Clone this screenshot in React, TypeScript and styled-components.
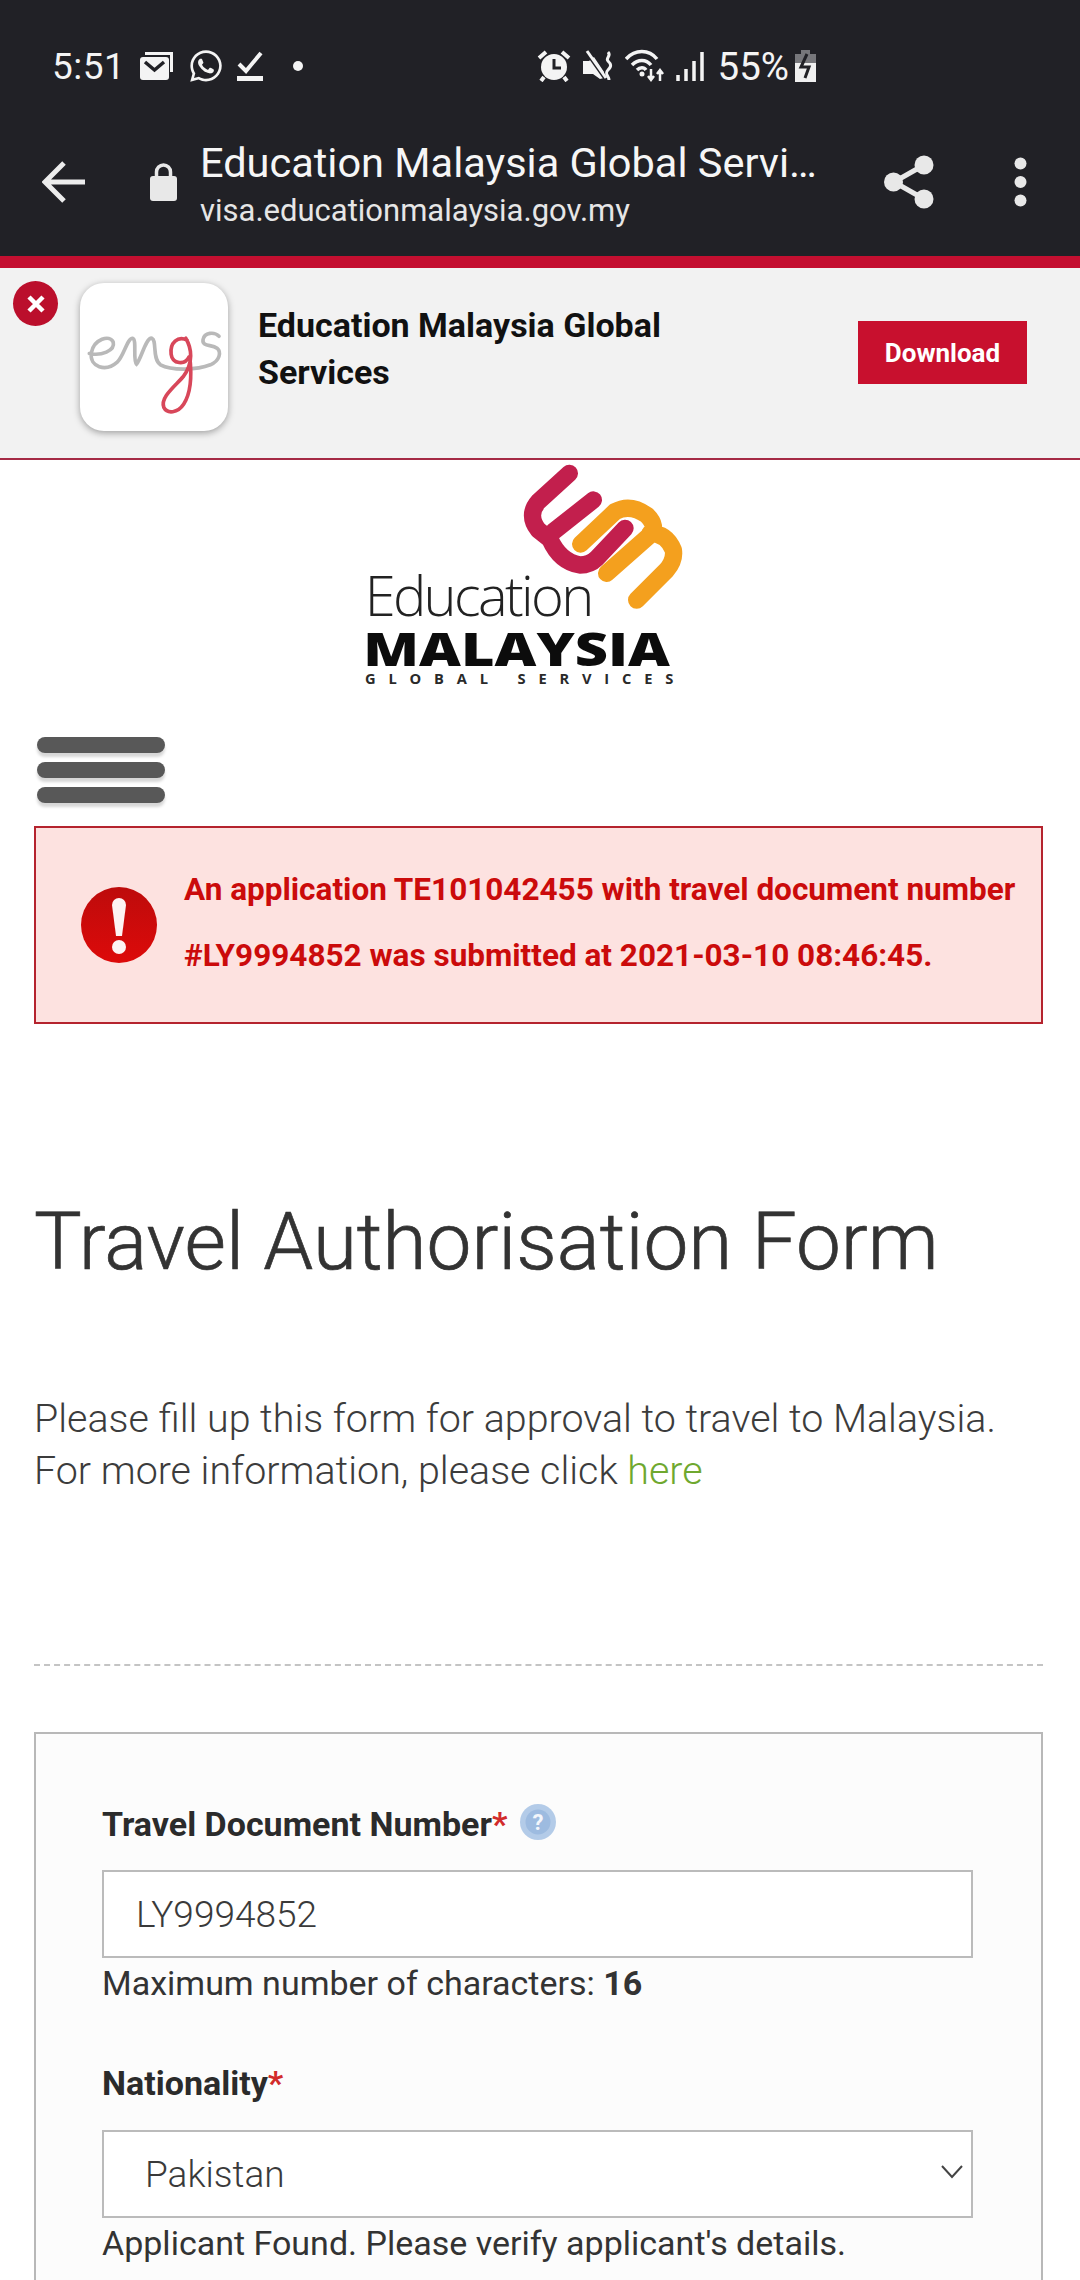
import React from 'react';
import styled, { createGlobalStyle } from 'styled-components';
import { FaWhatsapp } from 'react-icons/fa';

const GlobalStyle = createGlobalStyle`
  html, body {
    margin: 0;
    padding: 0;
    background: #fff;
    font-family: Roboto, "Liberation Sans", sans-serif;
  }
  #root {
    height: 2280px;
    overflow: hidden;
  }
  * { box-sizing: border-box; }
`;

const Header = styled.header`
  height: 256px;
  background: #212126;
  color: #f4f4f4;
  padding-top: 46px;
`;

const StatusBar = styled.div`
  height: 40px;
  display: flex;
  align-items: center;
  padding: 0 264px 0 52px;
`;

const Clock = styled.span`
  font-size: 37px;
  letter-spacing: 0.5px;
  margin-right: 14px;
`;

const StatusIcons = styled.div`
  display: flex;
  align-items: center;
  gap: ${(p: { $gap: number }) => p.$gap}px;
  color: #f4f4f4;
`;

const RightIcons = styled(StatusIcons)`
  margin-left: auto;
`;

const Battery = styled.span`
  font-size: 38.5px;
  margin: 0 -5px 0 3px;
`;

const StatusDot = styled.svg`
  width: 10px;
  height: 10px;
  margin-left: 17px;
`;

const Toolbar = styled.div`
  display: flex;
  align-items: center;
  height: 110px;
  margin-top: 41px;
  padding-left: 42px;
`;

const LockSlot = styled.div`
  margin-left: 65px;
  width: 50px;
  display: flex;
`;

const PageInfo = styled.div`
  width: 632px;
  padding-top: 5px;
  display: flex;
  flex-direction: column;
`;

const PageTitle = styled.div`
  font-size: 41.5px;
  line-height: 48px;
  white-space: nowrap;
  overflow: hidden;
  text-overflow: ellipsis;
  color: #f6f6f6;
`;

const PageUrl = styled.div`
  font-size: 31px;
  line-height: 38px;
  margin-top: 5px;
  color: #e6e6e6;
`;

const ToolbarActions = styled.div`
  margin-left: 52px;
  display: flex;
  align-items: center;
  gap: 80px;
`;

const Banner = styled.section`
  background: #f2f2f2;
  border-top: 12px solid #c40f30;
  border-bottom: 2px solid #a52a45;
  display: flex;
  align-items: flex-start;
  position: relative;
  padding: 15px 53px 0 80px;
  height: 204px;
`;

const CloseButton = styled.button`
  position: absolute;
  left: 13px;
  top: 13px;
  width: 45px;
  height: 45px;
  border-radius: 50%;
  border: 0;
  padding: 0;
  background: #bb0f2c;
  display: flex;
  align-items: center;
  justify-content: center;
`;

const AppIcon = styled.div`
  width: 148px;
  height: 148px;
  border-radius: 24px;
  background: #fff;
  box-shadow: 0 2px 7px rgba(0, 0, 0, 0.35);
  flex: none;
`;

const BannerTitle = styled.div`
  width: 440px;
  margin: 19px 0 0 30px;
  font-size: 34px;
  line-height: 47px;
  font-weight: 700;
  color: #111;
`;

const DownloadButton = styled.button`
  margin: 38px 0 0 auto;
  width: 169px;
  height: 63px;
  background: #c8102e;
  color: #fff;
  border: 0;
  padding: 0;
  font: 700 26px Roboto, sans-serif;
`;

const LogoRow = styled.div`
  display: flex;
  justify-content: center;
  padding-right: 40px;
  height: 240px;
`;

const Main = styled.main`
  padding: 0 37px 0 34px;
`;

const MenuButton = styled.div`
  width: 128px;
  margin: 37px 0 0 3px;
  display: flex;
  flex-direction: column;
  gap: 9px;
`;

const MenuBar = styled.span`
  height: 16px;
  border-radius: 8px;
  background: #585858;
  box-shadow: 0 4px 3px rgba(0, 0, 0, 0.16);
  filter: blur(0.7px);
`;

const Alert = styled.div`
  margin-top: 23px;
  height: 198px;
  border: 2px solid #b5232e;
  background: #fde2e0;
  display: flex;
  align-items: center;
  padding-left: 45px;
`;

const AlertText = styled.div`
  margin: -5px 0 0 27px;
  font-size: 31.500px;
  line-height: 66px;
  font-weight: 700;
  color: #cb0b0b;
  white-space: nowrap;
`;

const Title = styled.h1`
  margin: 173px 0 0;
  font-size: 80px;
  line-height: 90px;
  font-weight: 300;
  color: #333;
  -webkit-text-stroke: 0.7px #333;
`;

const Intro = styled.p`
  margin: 106px 0 0;
  font-size: 39.400px;
  line-height: 52px;
  font-weight: 300;
  color: #3c3c3c;
`;

const IntroLink = styled.a`
  color: #6fa82f;
`;

const Divider = styled.hr`
  margin: 167px 0 0;
  border: 0;
  border-top: 2px dashed #c4c4c4;
`;

const FormCard = styled.form`
  margin-top: 66px;
  border: 2px solid #b8b8b8;
  background: #fcfcfc;
  padding: 66px 68px 100px 66px;
  height: 700px;
`;

const Label = styled.label`
  display: flex;
  align-items: center;
  height: 50px;
  font-size: 34px;
  font-weight: 700;
  color: #2b2b2b;
`;

const Required = styled.span`
  color: #d22b2b;
  font-weight: 700;
`;

const HelpIcon = styled.svg`
  margin: -4px 0 0 12px;
  width: 38px;
  height: 38px;
`;

const Field = styled.div`
  position: relative;
  margin-top: ${(p: { $top: number }) => p.$top}px;
  height: 88px;
`;

const controlStyles = `
  display: block;
  width: 100%;
  height: 100%;
  border: 2px solid #bbb;
  border-radius: 0;
  background: #fff;
  font-family: Roboto, sans-serif;
  font-size: 37px;
  font-weight: 300;
  color: #3a3a3a;
  outline: 0;
`;

const TextInput = styled.input`
  ${controlStyles}
  padding: 0 32px;
`;

const SelectInput = styled.select`
  ${controlStyles}
  appearance: none;
  padding: 0 41px;
`;

const Chevron = styled.svg`
  position: absolute;
  right: 9px;
  top: 34px;
  width: 24px;
  height: 16px;
`;

const Hint = styled.div`
  margin-top: 7px;
  font-size: 34px;
  line-height: 36px;
  color: #333;
  font-weight: 400;
`;

const FieldBlock = styled.div`
  margin-top: ${(p: { $top: number }) => p.$top}px;
`;

const MailIcon = () => (
  <svg width="36" height="30" viewBox="0 0 36 30">
    <path d="M6 1h28v3H6zM31 1h3v20h-3z" fill="currentColor" />
    <rect x="1" y="6" width="29" height="23" rx="3" fill="currentColor" />
    <path d="M6 11l9.500 8L25 11" fill="none" stroke="#212126" strokeWidth="3.500" />
  </svg>
);

const CheckIcon = () => (
  <svg width="26" height="30" viewBox="0 0 26 30">
    <path d="M2 13l7 7L24 2" fill="none" stroke="currentColor" strokeWidth="4" />
    <rect y="25" width="26" height="5" fill="currentColor" />
  </svg>
);

const DotIcon = () => (
  <StatusDot viewBox="0 0 10 10">
    <circle cx="5" cy="5" r="5" fill="currentColor" />
  </StatusDot>
);

const AlarmIcon = () => (
  <svg width="34" height="32" viewBox="0 0 34 32">
    <path d="M2 8l7-6M32 8l-7-6" stroke="currentColor" strokeWidth="4" />
    <circle cx="17" cy="17" r="13" fill="currentColor" />
    <path d="M17 9v9h7" fill="none" stroke="#212126" strokeWidth="3" />
    <path d="M7 27l-3 4M27 27l3 4" stroke="currentColor" strokeWidth="4" />
  </svg>
);

const MuteIcon = () => (
  <svg width="32" height="32" viewBox="0 0 32 32">
    <path d="M1 11h6l5-4 10 15v6l-4 1-7-5H1z" fill="currentColor" />
    <path d="M4 2l19 27" stroke="#212126" strokeWidth="3" />
    <path d="M5 1l19 27" stroke="currentColor" strokeWidth="3" />
    <path d="M26 2c4 4-3 6 0 9s4 5 0 9 1 6 1 10" fill="none" stroke="currentColor" strokeWidth="3" />
  </svg>
);

const WifiIcon = () => (
  <svg width="40" height="34" viewBox="0 0 40 34">
    <g fill="none" stroke="currentColor" strokeWidth="3.500">
      <path d="M1 10c9-10 23-10 31 0" />
      <path d="M7 16c6-6 14-6 19 0" />
      <path d="M12 21c3-3 7-3 9 0" />
    </g>
    <circle cx="17" cy="25" r="2.500" fill="currentColor" />
    <path d="M26 20v10M23 27l3 4 3-4M35 32V22M32 25l3-4 3 4" fill="none" stroke="currentColor" strokeWidth="2.500" />
  </svg>
);

const SignalIcon = () => (
  <svg width="28" height="30" viewBox="0 0 28 30">
    <path d="M2 24v6M10 18v12M18 10v20M26 1v29" stroke="currentColor" strokeWidth="3.500" />
  </svg>
);

const BatteryIcon = () => (
  <svg width="21" height="32" viewBox="0 0 21 32">
    <path d="M6 0h9v4h6v9H0V4h6z" fill="#77777b" />
    <path d="M0 13h21v19H0z" fill="#f0f0f0" />
    <path d="M12 4L6 17h8l-4 11" fill="none" stroke="#212126" strokeWidth="3" />
  </svg>
);

const BackIcon = () => (
  <svg width="43" height="42" viewBox="0 0 43 42">
    <path d="M22 2L3 21l19 19M3 21h40" fill="none" stroke="#ececec" strokeWidth="5" />
  </svg>
);

const LockIcon = () => (
  <svg width="27" height="38" viewBox="0 0 27 38">
    <path d="M6.500 16V9a7 7 0 0 1 14 0v7" fill="none" stroke="#e8e8e8" strokeWidth="3.500" />
    <rect y="13" width="27" height="25" rx="3" fill="#e8e8e8" />
  </svg>
);

const ShareIcon = () => (
  <svg width="50" height="54" viewBox="0 0 50 54">
    <path d="M40 10L10 27l30 17" fill="none" stroke="#e8e8e8" strokeWidth="5" />
    <circle cx="40" cy="10" r="9.500" fill="#e8e8e8" />
    <circle cx="9.500" cy="27" r="9.500" fill="#e8e8e8" />
    <circle cx="40" cy="44" r="9.500" fill="#e8e8e8" />
  </svg>
);

const MoreIcon = () => (
  <svg width="13" height="50" viewBox="0 0 13 50">
    <circle cx="6.500" cy="6.500" r="6" fill="#e8e8e8" />
    <circle cx="6.500" cy="25" r="6" fill="#e8e8e8" />
    <circle cx="6.500" cy="43.500" r="6" fill="#e8e8e8" />
  </svg>
);

const CloseIcon = () => (
  <svg width="20" height="20" viewBox="0 0 20 20">
    <path d="M3 3l14 14M17 3L3 17" stroke="#fff" strokeWidth="4.500" />
  </svg>
);

const EmgsMark = () => (
  <svg width="148" height="148" viewBox="0 0 445 445">
    <g fill="none" strokeLinecap="round">
      <path
        d="M28 212c35 8 78-8 72-34-10-24-58-10-66 32-6 44 44 58 78 28 20-18 30-72 46-72 14 4 0 66 12 78 14-16 28-80 46-78 16 6 0 62 26 80 34 18 110 16 150 0 28-12 34-38 20-50-16-12-46-4-42-26 4-22 34-24 48-10"
        stroke="#b9b9b9"
        strokeWidth="11"
      />
      <path
        d="M322 172c-28-14-52 8-48 42 4 30 42 34 54 8M318 166c18 30 24 74-8 116-22 26-70 62-58 92 10 20 42 18 60-10 22-34 24-90 18-142"
        stroke="#d8475a"
        strokeWidth="11"
      />
    </g>
  </svg>
);

const LogoMark = () => (
  <svg width="380" height="240" viewBox="0 30 1140 720">
    <g fill="none" strokeLinecap="round" strokeLinejoin="round" strokeWidth="52">
      <path
        d="M752 282L855 185Q900 160 950 195Q985 230 960 255L830 370M960 250Q1010 250 1030 300Q1035 330 1010 360L920 450"
        stroke="#f4a01e"
      />
      <path
        d="M718 70L625 155Q590 195 625 240L660 268M790 150L670 245M660 268Q690 335 750 345Q780 345 800 325L885 235"
        stroke="#c21f4d"
      />
    </g>
    <text x="104" y="497" fontFamily="Open Sans, sans-serif" fontWeight="300" fontSize="168" letterSpacing="-8" fill="#222">
      Education
    </text>
    <text x="100" y="648" fontFamily="Open Sans, sans-serif" fontWeight="800" fontSize="140" textLength="920" lengthAdjust="spacingAndGlyphs" fill="#0c0c0c">
      MALAYSIA
    </text>
    <text x="105" y="703" fontFamily="Open Sans, sans-serif" fontWeight="700" fontSize="44" textLength="925" fill="#2a2a2a">
      GLOBAL SERVICES
    </text>
  </svg>
);

const AlertIcon = () => (
  <svg width="76" height="76" viewBox="0 0 76 76">
    <defs>
      <linearGradient id="alertFill" x1="0" y1="0" x2="0" y2="1">
        <stop offset="0" stopColor="#bd0b0b" />
        <stop offset="1" stopColor="#dd0a0a" />
      </linearGradient>
    </defs>
    <circle cx="38" cy="38" r="38" fill="url(#alertFill)" />
    <path d="M31 18a7 7 0 0 1 14 0l-4 31h-6z" fill="#fdf3f3" />
    <circle cx="38" cy="60" r="7" fill="#fdf3f3" />
  </svg>
);

export default function App() {
  return (
    <>
      <GlobalStyle />
      <Header>
        <StatusBar>
          <Clock>5:51</Clock>
          <StatusIcons $gap={13}>
            <MailIcon />
            <FaWhatsapp size={36} />
            <CheckIcon />
            <DotIcon />
          </StatusIcons>
          <RightIcons $gap={11}>
            <AlarmIcon />
            <MuteIcon />
            <WifiIcon />
            <SignalIcon />
            <Battery>55%</Battery>
            <BatteryIcon />
          </RightIcons>
        </StatusBar>
        <Toolbar>
          <BackIcon />
          <LockSlot>
            <LockIcon />
          </LockSlot>
          <PageInfo>
            <PageTitle>Education Malaysia Global Services</PageTitle>
            <PageUrl>visa.educationmalaysia.gov.my</PageUrl>
          </PageInfo>
          <ToolbarActions>
            <ShareIcon />
            <MoreIcon />
          </ToolbarActions>
        </Toolbar>
      </Header>
      <Banner>
        <CloseButton type="button" aria-label="Close">
          <CloseIcon />
        </CloseButton>
        <AppIcon>
          <EmgsMark />
        </AppIcon>
        <BannerTitle>Education Malaysia Global Services</BannerTitle>
        <DownloadButton type="button">Download</DownloadButton>
      </Banner>
      <LogoRow>
        <LogoMark />
      </LogoRow>
      <Main>
        <MenuButton>
          <MenuBar />
          <MenuBar />
          <MenuBar />
        </MenuButton>
        <Alert>
          <AlertIcon />
          <AlertText>
            An application TE101042455 with travel document number
            <br />
            #LY9994852 was submitted at 2021-03-10 08:46:45.
          </AlertText>
        </Alert>
        <Title>Travel Authorisation Form</Title>
        <Intro>
          Please fill up this form for approval to travel to Malaysia.
          <br />
          For more information, please click <IntroLink>here</IntroLink>
        </Intro>
        <Divider />
        <FormCard>
          <FieldBlock $top={-1}>
            <Label>
              Travel Document Number<Required>*</Required>
              <HelpIcon viewBox="0 0 38 38">
                <circle cx="19" cy="19" r="18" fill="#b3cbe8" />
                <circle cx="19" cy="19" r="12.500" fill="#9dbbe0" />
                <text x="19" y="27" textAnchor="middle" fontFamily="Roboto" fontWeight="700" fontSize="22" fill="#f3f6fb">?</text>
              </HelpIcon>
            </Label>
            <Field $top={21}>
              <TextInput readOnly value="LY9994852" />
            </Field>
            <Hint>
              Maximum number of characters: <b>16</b>
            </Hint>
          </FieldBlock>
          <FieldBlock $top={57}>
            <Label>
              Nationality<Required>*</Required>
            </Label>
            <Field $top={22}>
              <SelectInput defaultValue="Pakistan">
                <option>Pakistan</option>
              </SelectInput>
              <Chevron viewBox="0 0 24 16">
                <path d="M2 2l10 11L22 2" fill="none" stroke="#444" strokeWidth="2" />
              </Chevron>
            </Field>
            <Hint>Applicant Found. Please verify applicant's details.</Hint>
          </FieldBlock>
        </FormCard>
      </Main>
    </>
  );
}
